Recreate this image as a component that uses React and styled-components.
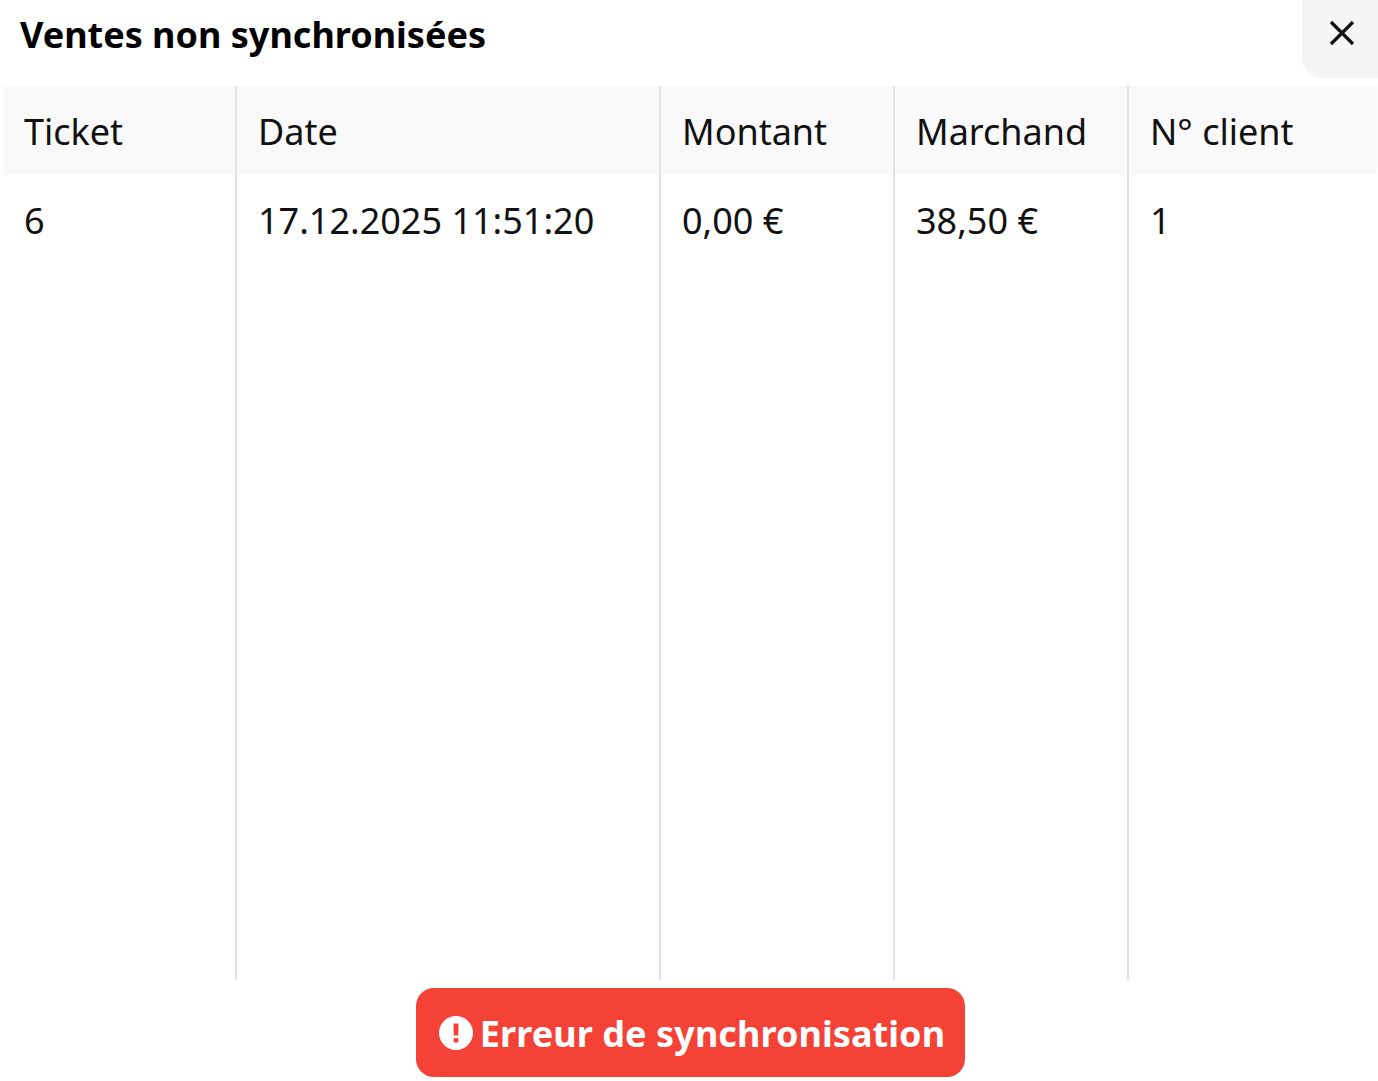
import React from 'react';
import styled, { createGlobalStyle } from 'styled-components';

const GlobalStyle = createGlobalStyle`
  html, body {
    margin: 0;
    background: #ffffff;
  }
  body {
    font-family: "Noto Sans", "Liberation Sans", sans-serif;
    color: #111111;
  }
`;

const Page = styled.div`
  width: 1378px;
  height: 1081px;
  display: flex;
  flex-direction: column;
  overflow: hidden;
`;

const Header = styled.div`
  height: 86px;
  display: flex;
  justify-content: space-between;
  align-items: flex-start;
`;

const Title = styled.h1`
  margin: 0;
  padding: 10px 0 0 20px;
  font-size: 36px;
  line-height: 50px;
  font-weight: 700;
  color: #000000;
`;

const CloseButton = styled.button`
  width: 76px;
  height: 78px;
  padding: 0 0 13px 4px;
  border: none;
  border-radius: 0 0 0 20px;
  background: #f5f5f5;
  display: flex;
  align-items: center;
  justify-content: center;
`;

const Table = styled.div`
  width: 1373px;
  height: 894px;
  margin-left: 4px;
  display: grid;
  grid-template-columns: 233px 424px 234px 234px 248px;
  grid-template-rows: 89px 1fr;
`;

const Cell = styled.div`
  padding-left: ${props => (props.$first ? '20px' : '21px')};
  font-size: 36px;
  line-height: 92px;
  white-space: nowrap;
  background: ${props => (props.$head ? '#f9f9f9' : '#ffffff')};
  border-right: ${props => (props.$last ? 'none' : '2px solid #e2e2e2')};
`;

const Footer = styled.div`
  flex: 1;
  display: flex;
  justify-content: center;
  padding: 8px 0 0 3px;
`;

const ErrorButton = styled.button`
  width: 549px;
  height: 89px;
  border: none;
  border-radius: 18px;
  background: #f44336;
  color: #ffffff;
  font-family: inherit;
  font-size: 36px;
  font-weight: 700;
  display: flex;
  align-items: center;
  justify-content: center;
  gap: 7px;
  padding: 0 0 0 3px;
`;

const ErrorLabel = styled.span`
  padding-top: 2px;
  letter-spacing: 0.07px;
`;

const heads = ['Ticket', 'Date', 'Montant', 'Marchand', 'N° client'];
const row = ['6', '17.12.2025 11:51:20', '0,00 €', '38,50 €', '1'];

const App = () => (
  <Page>
    <GlobalStyle />
    <Header>
      <Title>Ventes non synchronisées</Title>
      <CloseButton aria-label="Fermer">
        <svg width="26" height="26" viewBox="0 0 26 26" fill="none" stroke="#111" strokeWidth="3.2">
          <path d="M2 2 L24 24 M24 2 L2 24" />
        </svg>
      </CloseButton>
    </Header>
    <Table>
      {heads.map((h, i) => (
        <Cell $head $first={i === 0} $last={i === 4} key={h}>{h}</Cell>
      ))}
      {row.map((c, i) => (
        <Cell $first={i === 0} $last={i === 4} key={c}>{c}</Cell>
      ))}
    </Table>
    <Footer>
      <ErrorButton>
        <svg width="34" height="34" viewBox="0 0 34 34">
          <circle cx="17" cy="17" r="17" fill="#fff" />
          <rect x="14.6" y="7.5" width="4.8" height="12" rx="1" fill="#f44336" />
          <rect x="14.6" y="22" width="4.8" height="4.6" rx="1" fill="#f44336" />
        </svg>
        <ErrorLabel>Erreur de synchronisation</ErrorLabel>
      </ErrorButton>
    </Footer>
  </Page>
);

export default App;
